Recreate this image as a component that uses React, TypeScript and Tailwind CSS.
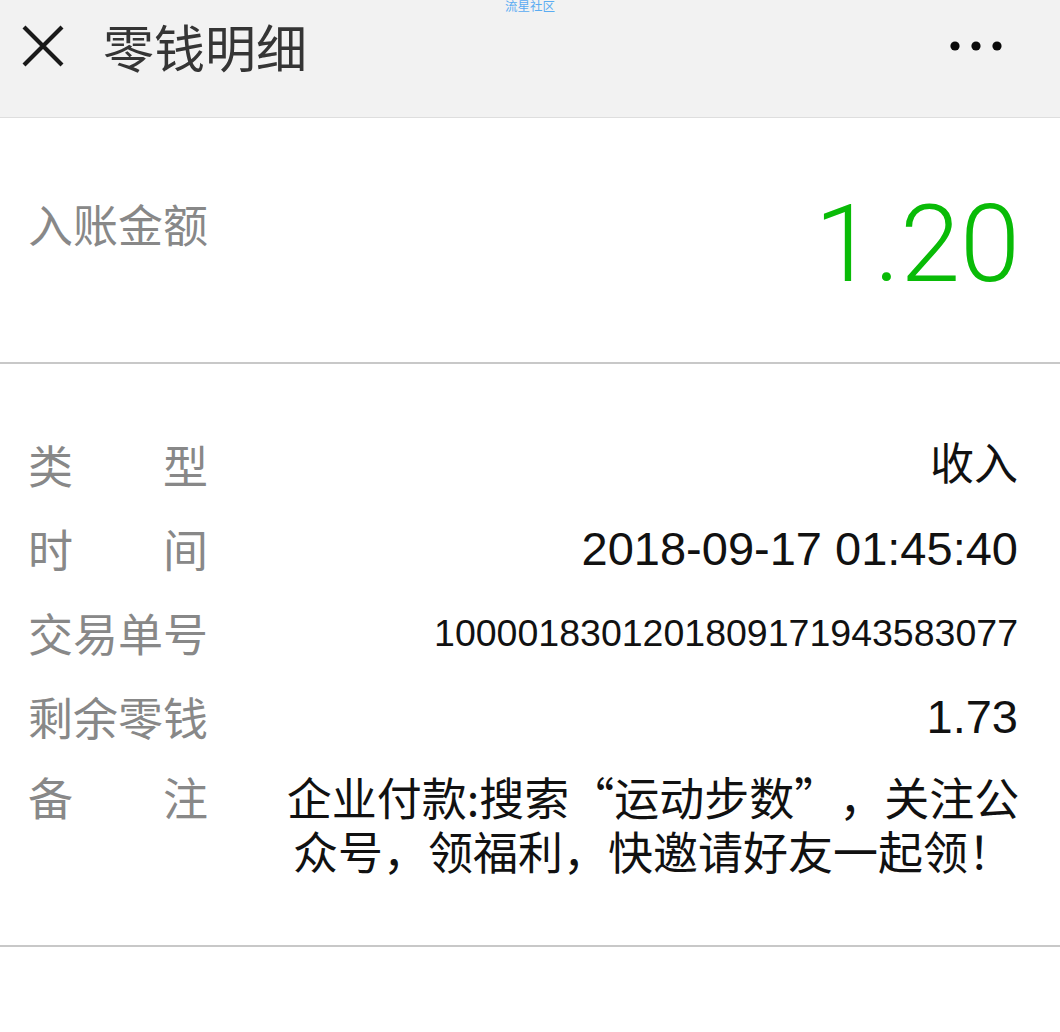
import React from "react";

interface DetailRow {
  label: string[];
  value: string;
  valueClass: string;
}

const rows: DetailRow[] = [
  { label: ["类", "型"], value: "收入", valueClass: "text-[44px]" },
  { label: ["时", "间"], value: "2018-09-17 01:45:40", valueClass: "text-[47px]" },
  { label: ["交易单号"], value: "1000018301201809171943583077", valueClass: "text-[37.5px]" },
  { label: ["剩余零钱"], value: "1.73", valueClass: "text-[47px]" },
];

function CloseIcon() {
  return (
    <svg width="42" height="42" viewBox="0 0 42 42" className="shrink-0">
      <path d="M2 2 L40 40 M40 2 L2 40" stroke="#1a1a1a" strokeWidth="4.2" strokeLinecap="butt" />
    </svg>
  );
}

function MoreIcon() {
  return (
    <svg width="54" height="12" viewBox="0 0 54 12" className="shrink-0">
      <circle cx="5" cy="6" r="4.6" fill="#0a0a0a" />
      <circle cx="26" cy="6" r="4.6" fill="#0a0a0a" />
      <circle cx="47" cy="6" r="4.6" fill="#0a0a0a" />
    </svg>
  );
}

function Label({ parts }: { parts: string[] }) {
  return (
    <div className="w-[180px] shrink-0 flex justify-between whitespace-nowrap text-[45px] leading-[54px] text-[#888888] font-['Noto_Sans_CJK_SC',sans-serif]">
      {parts.map((p) => (
        <span key={p}>{p}</span>
      ))}
    </div>
  );
}

// quote marks take a whole em box, as the phone font draws them
function OpenQ() {
  return <span className="inline-block w-[45px] text-right">“</span>;
}
function CloseQ() {
  return <span className="inline-block w-[45px] text-left">”</span>;
}

export default function App() {
  return (
    <div className="w-[1060px] min-h-[1032px] bg-white font-['Noto_Sans_CJK_SC',sans-serif]">
      {/* top bar */}
      <div className="relative h-[118px] bg-[#f2f2f2] border-b border-[#dedede]">
        <div className="absolute top-[-2px] left-1/2 -translate-x-1/2 text-[12.5px] leading-[16px] text-[#5aacf2]">
          流星社区
        </div>
        <div className="flex items-center h-[92px] pl-[22px] pr-[56px]">
          <CloseIcon />
          <div className="ml-[39px] text-[51px] leading-[60px] text-[#353535]">零钱明细</div>
          <div className="ml-auto">
            <MoreIcon />
          </div>
        </div>
      </div>

      {/* amount */}
      <div className="flex justify-between items-start h-[246px] pl-[28px] pr-[40px] border-b-2 border-[#c8c8c8]">
        <div className="mt-[83px] text-[45px] leading-[45px] text-[#888888]">入账金额</div>
        <div className="mt-[72px] text-[108px] leading-none font-light text-[#09bb07] font-['Roboto',sans-serif]">
          1.20
        </div>
      </div>

      {/* details */}
      <div className="flex flex-col gap-[30px] pt-[74px] pb-[67px] pl-[28px] pr-[42px] border-b-2 border-[#c8c8c8]">
        {rows.map((r) => (
          <div key={r.value} className="flex items-start">
            <Label parts={r.label} />
            <div
              className={`flex-1 text-right leading-[54px] text-[#111111] font-['Liberation_Sans','Noto_Sans_CJK_SC',sans-serif] ${r.valueClass}`}
            >
              {r.value}
            </div>
          </div>
        ))}
        <div className="flex items-start -mt-[4px]">
          <Label parts={["备", "注"]} />
          <div className="flex-1 pl-[72px] -mr-[8px] text-center text-[45px] leading-[54px] text-[#111111] whitespace-nowrap">
            企业付款:搜索<OpenQ />运动步数<CloseQ />，关注公
            <br />
            众号，领福利，快邀请好友一起领！
          </div>
        </div>
      </div>
    </div>
  );
}
